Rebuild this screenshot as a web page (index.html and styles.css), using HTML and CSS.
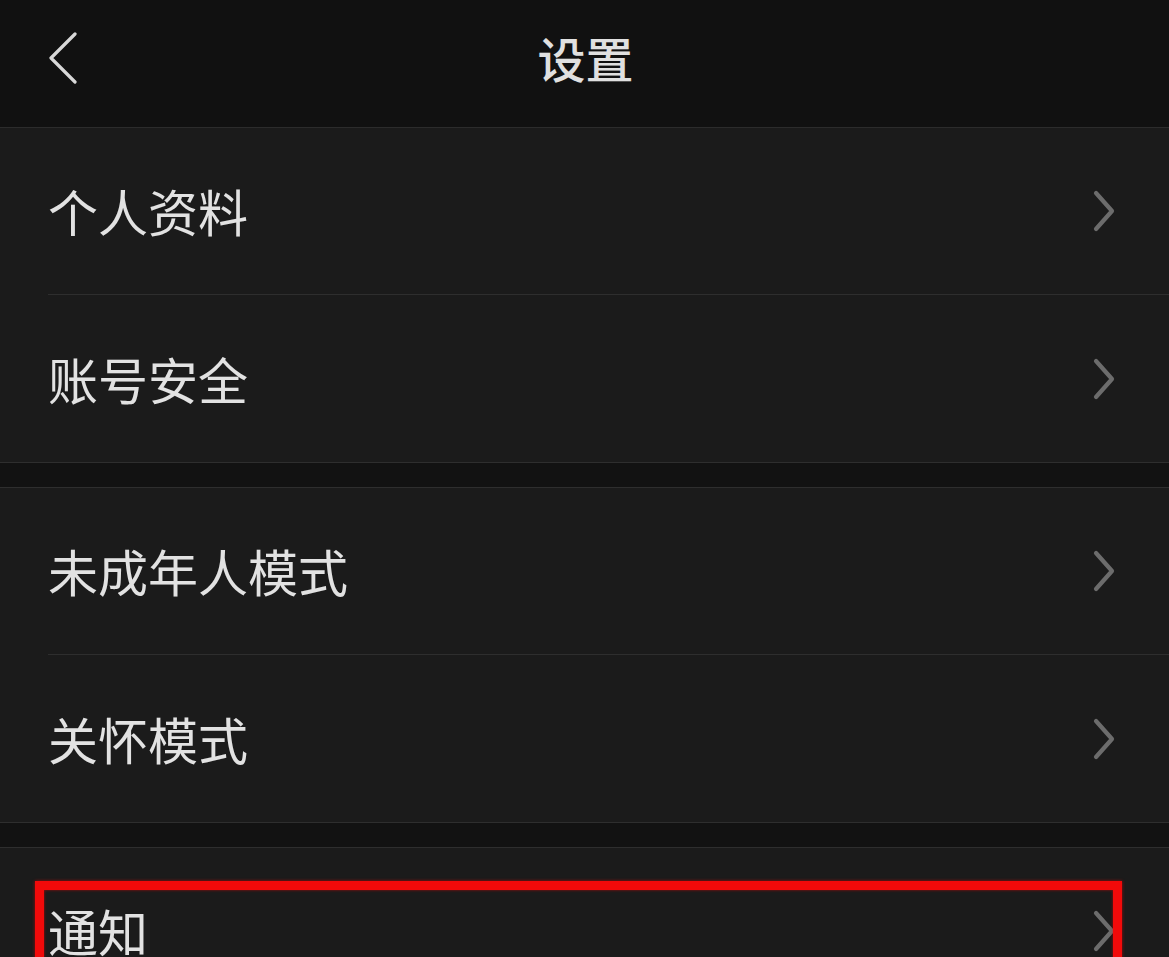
FILE: index.html
```html
<!DOCTYPE html>
<html lang="zh-CN">
<head>
<meta charset="utf-8">
<title>设置</title>
<link rel="stylesheet" href="styles.css">
</head>
<body>
<div class="page">
  <header class="header">
    <svg class="back" width="30" height="52" viewBox="0 0 30 52"><polyline points="27,2 3,26 27,50" fill="none" stroke="#d8d8d8" stroke-width="3.2" stroke-linecap="round" stroke-linejoin="round"/></svg>
    <h1 class="title">设置</h1>
  </header>

  <section class="group">
    <div class="row"><span class="label">个人资料</span><svg class="chev" width="24" height="42" viewBox="0 0 24 42"><polyline points="4,3 20,21 4,39" fill="none" stroke="#6c6c6c" stroke-width="4.2" stroke-linecap="round" stroke-linejoin="round"/></svg></div>
    <div class="row"><span class="label">账号安全</span><svg class="chev" width="24" height="42" viewBox="0 0 24 42"><polyline points="4,3 20,21 4,39" fill="none" stroke="#6c6c6c" stroke-width="4.2" stroke-linecap="round" stroke-linejoin="round"/></svg></div>
  </section>
  <div class="gap"></div>
  <section class="group">
    <div class="row"><span class="label">未成年人模式</span><svg class="chev" width="24" height="42" viewBox="0 0 24 42"><polyline points="4,3 20,21 4,39" fill="none" stroke="#6c6c6c" stroke-width="4.2" stroke-linecap="round" stroke-linejoin="round"/></svg></div>
    <div class="row"><span class="label">关怀模式</span><svg class="chev" width="24" height="42" viewBox="0 0 24 42"><polyline points="4,3 20,21 4,39" fill="none" stroke="#6c6c6c" stroke-width="4.2" stroke-linecap="round" stroke-linejoin="round"/></svg></div>
  </section>
  <div class="gap"></div>
  <section class="group">
    <div class="row"><span class="label">通知</span><svg class="chev" width="24" height="42" viewBox="0 0 24 42"><polyline points="4,3 20,21 4,39" fill="none" stroke="#6c6c6c" stroke-width="4.2" stroke-linecap="round" stroke-linejoin="round"/></svg></div>
  </section>
  <div class="highlight"></div>
</div>
</body>
</html>
```

FILE: styles.css
```css
html, body {
  margin: 0;
  padding: 0;
  background: #1b1b1b;
}
body {
  font-family: "Noto Sans CJK SC", "Noto Sans", sans-serif;
  color: #e4e4e4;
  overflow: hidden;
}
.page {
  position: relative;
  width: 1169px;
  height: 957px;
  overflow: hidden;
  background: #1b1b1b;
}
.header {
  position: relative;
  height: 127px;
  background: #111111;
  border-bottom: 1px solid #2c2c2c;
  display: flex;
  align-items: center;
  justify-content: center;
}
.back {
  position: absolute;
  left: 48px;
  top: 32px;
}
.title {
  margin: 0;
  font-size: 48px;
  font-weight: 500;
  color: #e0e0e0;
  line-height: 1;
  padding-left: 2px;
  position: relative;
  top: -7px;
}
.group {
  background: #1b1b1b;
}
.row {
  height: 166px;
  margin-left: 48px;
  padding-right: 53px;
  display: flex;
  align-items: center;
  justify-content: space-between;
}
.row + .row {
  height: 167px;
  border-top: 1px solid #2e2e2e;
}
.label {
  font-size: 50px;
  line-height: 1;
  color: #e2e2e2;
  position: relative;
  top: -1px;
}
.gap {
  height: 24px;
  background: #121212;
  border-top: 1px solid #2e2e2e;
  border-bottom: 1px solid #2e2e2e;
}
.highlight {
  position: absolute;
  left: 35px;
  top: 881px;
  width: 1069px;
  height: 200px;
  border: 9px solid #f20a0a;
  box-shadow: 0 0 3px rgba(255, 0, 0, 0.6), inset 0 0 3px rgba(255, 0, 0, 0.6);
}
```
